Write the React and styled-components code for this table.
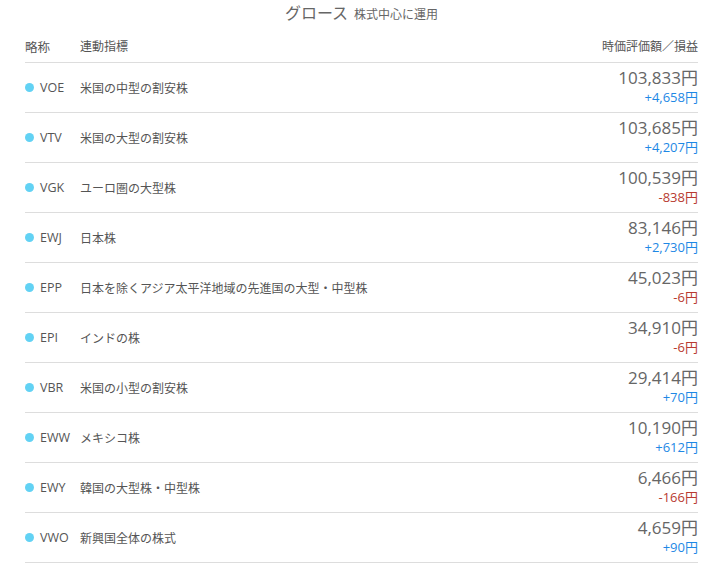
import styled, { createGlobalStyle } from 'styled-components';

const GlobalStyle = createGlobalStyle`
  body {
    margin: 0;
    background: #fff;
    font-family: "Open Sans", "Noto Sans CJK JP", sans-serif;
    color: #555;
  }
`;

const funds = [
  { code: 'VOE', name: '米国の中型の割安株', value: '103,833', diff: '+4,658' },
  { code: 'VTV', name: '米国の大型の割安株', value: '103,685', diff: '+4,207' },
  { code: 'VGK', name: 'ユーロ圏の大型株', value: '100,539', diff: '-838' },
  { code: 'EWJ', name: '日本株', value: '83,146', diff: '+2,730' },
  { code: 'EPP', name: '日本を除くアジア太平洋地域の先進国の大型・中型株', value: '45,023', diff: '-6' },
  { code: 'EPI', name: 'インドの株', value: '34,910', diff: '-6' },
  { code: 'VBR', name: '米国の小型の割安株', value: '29,414', diff: '+70' },
  { code: 'EWW', name: 'メキシコ株', value: '10,190', diff: '+612' },
  { code: 'EWY', name: '韓国の大型株・中型株', value: '6,466', diff: '-166' },
  { code: 'VWO', name: '新興国全体の株式', value: '4,659', diff: '+90' },
];

const Page = styled.div`
  padding: 0 22px 0 25px;
`;

const Title = styled.div`
  display: flex;
  justify-content: center;
  align-items: baseline;
  gap: 6px;
  height: 30px;
  box-sizing: border-box;
  color: #666;
`;

const TitleMain = styled.span`
  font-size: 16px;
`;

const TitleSub = styled.span`
  font-size: 12px;
`;

const HeaderRow = styled.div`
  display: flex;
  align-items: center;
  height: 33px;
  font-size: 12px;
  border-bottom: 1px solid #ddd;
  box-sizing: border-box;
`;

const Row = styled.div`
  display: flex;
  align-items: center;
  height: 50px;
  font-size: 12px;
  border-bottom: 1px solid #ddd;
  box-sizing: border-box;
`;

const CodeCell = styled.div`
  width: 55px;
  display: flex;
  align-items: center;
  gap: 6px;
  font-size: 12.5px;
`;

const Dot = styled.span`
  width: 9px;
  height: 9px;
  border-radius: 50%;
  background: #62d2f4;
`;

const NameCell = styled.div`
  flex: 1;
`;

const AmountCell = styled.div`
  display: flex;
  flex-direction: column;
  align-items: flex-end;
  line-height: 1;
`;

const Value = styled.span`
  font-size: 17px;
  color: #666;
  margin-top: -2px;
`;

const Diff = styled.span`
  font-size: 13px;
  margin-top: 5px;
  color: ${(p) => (p.$neg ? '#b83a30' : '#1e88e5')};
`;

export default function App() {
  return (
    <>
      <GlobalStyle />
      <Page>
        <Title>
          <TitleMain>グロース</TitleMain>
          <TitleSub>株式中心に運用</TitleSub>
        </Title>
        <HeaderRow>
          <CodeCell>略称</CodeCell>
          <NameCell>連動指標</NameCell>
          <span>時価評価額／損益</span>
        </HeaderRow>
        {funds.map((f) => (
          <Row key={f.code}>
            <CodeCell>
              <Dot />
              {f.code}
            </CodeCell>
            <NameCell>{f.name}</NameCell>
            <AmountCell>
              <Value>{f.value}円</Value>
              <Diff $neg={f.diff.startsWith('-')}>{f.diff}円</Diff>
            </AmountCell>
          </Row>
        ))}
      </Page>
    </>
  );
}
